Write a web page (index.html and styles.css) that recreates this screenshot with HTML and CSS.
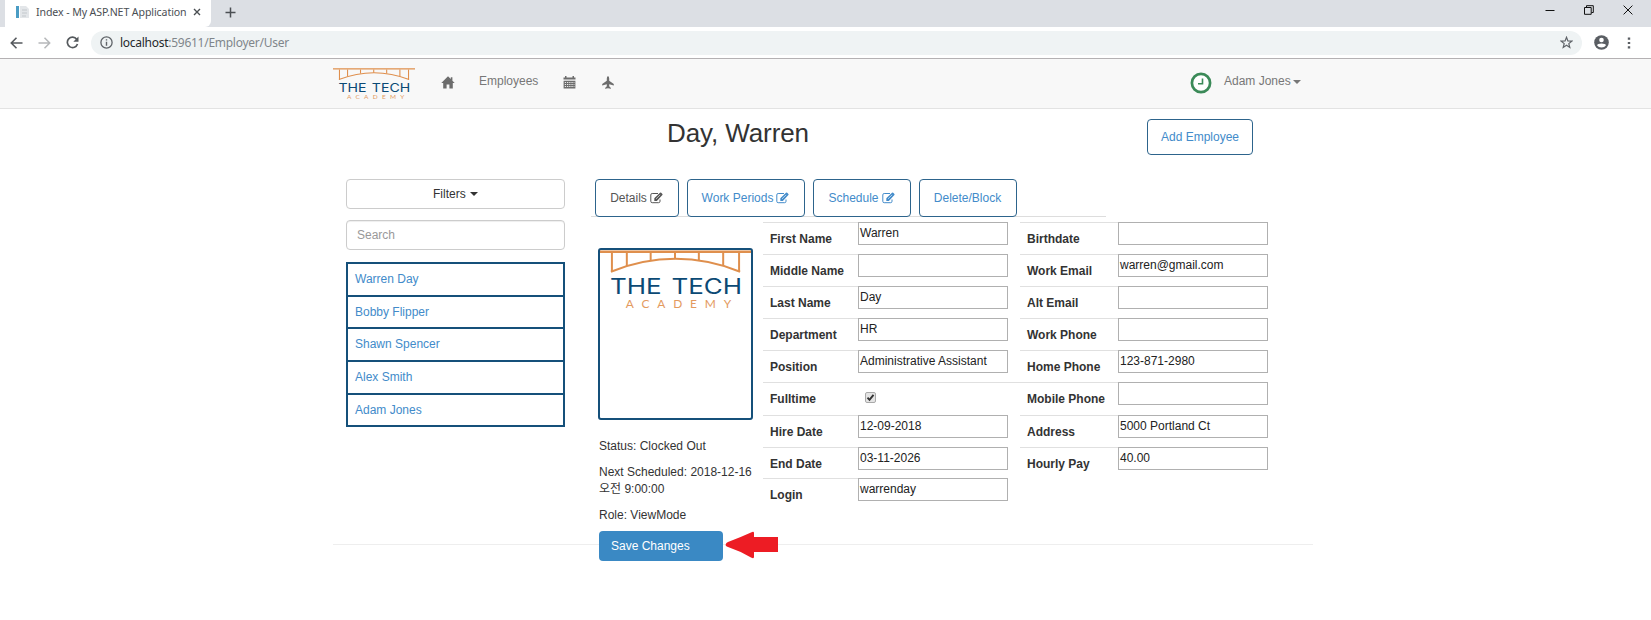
FILE: index.html
```html
<!DOCTYPE html>
<html lang="en">
<head>
<meta charset="utf-8">
<title>Index - My ASP.NET Application</title>
<link rel="stylesheet" href="styles.css">
</head>
<body>
<svg class="defs" width="0" height="0">
  <symbol id="bridge" viewBox="0 0 152 62">
    <g fill="none" stroke="#df8f4d" stroke-width="2">
      <path d="M0 1.700H152" stroke-width="2.400"/>
      <path d="M12 3V22M27 3V16M51 3V10.500M75.500 3V9M99.500 3V10.500M124 3V16M140 3V22"/>
      <path d="M11 21.700Q76 -4 141 21.700"/>
    </g>
  </symbol>
  <symbol id="edit" viewBox="0 0 13 12">
    <path d="M8 1.500H2.200Q.8 1.500 .8 2.900V9.300Q.8 10.700 2.200 10.700H8.600Q10 10.700 10 9.300V7.500" fill="none" stroke="currentColor" stroke-width="1"/>
    <path d="M4.300 8.900V6.300L10 .8Q10.600.3 11.200.8L12.400 2Q12.800 2.500 12.400 3L6.800 8.900Z" fill="currentColor"/>
    <path d="M6 6.900L10.200 2.800" stroke="#fff" stroke-width=".6"/>
  </symbol>
</svg>

<header class="chrome">
  <div class="tabstrip">
    <div class="tab">
      <svg width="14" height="14" viewBox="0 0 14 14"><path d="M4 1H10L13 4V13H4Z" fill="#e3e6e9"/><path d="M6 5H11M6 8H11M6 11H10" stroke="#c3c8cc"/><path d="M0 1H3V13H0Z" fill="#4a9cc4"/></svg>
      <span class="tab-title">Index - My ASP.NET Application</span>
      <svg class="tab-x" width="8" height="8" viewBox="0 0 8 8"><path d="M1 1L7 7M7 1L1 7" stroke="#4b4f53" stroke-width="1.400"/></svg>
    </div>
    <svg class="plus" width="11" height="11" viewBox="0 0 11 11"><path d="M5.500 .5V10.500M.5 5.500H10.500" stroke="#4b4f53" stroke-width="1.500"/></svg>
    <div class="winctl">
      <svg width="10" height="10" viewBox="0 0 10 10"><path d="M0.500 5.500H9.500" stroke="#111"/></svg>
      <svg width="10" height="10" viewBox="0 0 10 10"><path d="M.5 2.500H7.200V9.300H.5ZM2.500 2.500V.7H9.300V7.500H7.500" fill="none" stroke="#111"/></svg>
      <svg width="10" height="10" viewBox="0 0 10 10"><path d="M.6 .6L9.400 9.400M9.400 .6L.6 9.400" stroke="#111"/></svg>
    </div>
  </div>
  <div class="toolbar">
    <svg width="13" height="12" viewBox="0 0 13 12"><path d="M12.500 6H1.500M6.500 .8L1.300 6L6.500 11.200" fill="none" stroke="#55595d" stroke-width="1.600"/></svg>
    <svg width="13" height="12" viewBox="0 0 13 12"><path d="M.5 6H11.500M6.500 .8L11.700 6L6.500 11.200" fill="none" stroke="#b6b8ba" stroke-width="1.500"/></svg>
    <svg width="13" height="13" viewBox="0 0 13 13"><path d="M10.700 3.200A5.200 5.200 0 1 0 11.500 8" fill="none" stroke="#55595d" stroke-width="1.700"/><path d="M12.500 .5V5.700H7.300Z" fill="#55595d"/></svg>
    <div class="omnibox">
      <svg width="13" height="13" viewBox="0 0 13 13"><circle cx="6.500" cy="6.500" r="5.600" fill="none" stroke="#5f6368" stroke-width="1.300"/><path d="M6.500 5.800V9.800M6.500 3.200V4.600" stroke="#5f6368" stroke-width="1.400"/></svg>
      <span class="url"><b>localhost</b>:59611/Employer/User</span>
      <svg class="star" width="13" height="13" viewBox="0 0 13 13"><path d="M6.500 1.300L7.900 4.900L11.800 5.100L8.800 7.600L9.800 11.400L6.500 9.300L3.200 11.400L4.200 7.600L1.200 5.100L5.100 4.900Z" fill="none" stroke="#5f6368" stroke-width="1.200"/></svg>
    </div>
    <svg class="person" width="15" height="15" viewBox="0 0 15 15"><circle cx="7.500" cy="7.500" r="7.300" fill="#5a5e63"/><circle cx="7.500" cy="5" r="2.300" fill="#fff"/><path d="M3 10.200Q3.500 8.500 7.500 8.500T12 10.200Q10.500 12.500 7.500 12.500T3 10.200Z" fill="#fff"/></svg>
    <svg class="dots" width="4" height="12" viewBox="0 0 4 12"><path d="M.8 .5H3.200V2.700H.8ZM.8 4.900H3.200V7.100H.8ZM.8 9.300H3.200V11.500H.8Z" fill="#5a5e63"/></svg>
  </div>
</header>

<nav class="nav">
  <svg class="brand logo" width="82" height="33" viewBox="0 0 152 62" preserveAspectRatio="none">
    <use href="#bridge" width="152" height="62"/>
    <text class="word" x="10" y="45" textLength="52" lengthAdjust="spacingAndGlyphs">THE</text>
    <text class="word" x="72" y="45" textLength="71" lengthAdjust="spacingAndGlyphs">TECH</text>
    <text class="sub" x="26" y="59" textLength="106">ACADEMY</text>
  </svg>
  <svg class="home" width="14" height="13" viewBox="0 0 14 13"><path d="M7 .3L.3 7H2.200V12.500H5.600V8.500H8.400V12.500H11.800V7H13.700L11.400 4.700V1.300H9.800V3.100Z" fill="#6d6d6d"/></svg>
  <span class="employees">Employees</span>
  <svg class="cal" width="13" height="13" viewBox="0 0 13 13"><path d="M.5 1.500H2V0H3.500V1.500H9.500V0H11V1.500H12.500V3.600H.5ZM.6 4.700H12.400V12.500H.6Z" fill="#6d6d6d"/><path d="M1.800 6.500H11.400M1.800 8.500H11.400M1.800 10.500H11.400" stroke="#f8f8f8" stroke-width=".9" stroke-dasharray="1.300 .9"/></svg>
  <svg class="plane" width="12" height="13" viewBox="0 0 12 13"><path d="M6 0Q7.200 .8 7.200 2.500V4.800L11.800 8V9.500L7.200 8.300V10.300L8.900 12V12.700L6 12.200L3.100 12.700V12L4.800 10.300V8.300L.2 9.500V8L4.800 4.800V2.500Q4.800 .8 6 0Z" fill="#6d6d6d"/></svg>
  <svg class="clock" width="22" height="22" viewBox="0 0 22 22"><circle cx="11" cy="11" r="9.100" fill="#fff" stroke="#3b8a58" stroke-width="2.700"/><path d="M12.500 6.500V11.800H8" fill="none" stroke="#3b8a58" stroke-width="1.600"/></svg>
  <span class="user">Adam Jones</span><i class="caret"></i>
</nav>

<main class="page">
  <div class="titlebar">
    <h2>Day, Warren</h2>
    <a class="add">Add Employee</a>
  </div>
  <div class="columns">
    <aside class="side">
      <div class="filters">Filters <i class="caret dark"></i></div>
      <div class="search">Search</div>
      <ul class="people">
        <li>Warren Day</li><li>Bobby Flipper</li><li>Shawn Spencer</li><li>Alex Smith</li><li>Adam Jones</li>
      </ul>
    </aside>
    <section class="content">
      <div class="tabs">
        <a class="t1 active">Details <svg width="13" height="12"><use href="#edit"/></svg></a>
        <a class="t2">Work Periods <svg width="13" height="12"><use href="#edit"/></svg></a>
        <a class="t3">Schedule <svg width="13" height="12"><use href="#edit"/></svg></a>
        <a class="t4">Delete/Block</a>
      </div>
      <div class="detail">
        <div class="profile">
          <div class="photo">
            <svg class="logo" width="151" height="62" viewBox="0 0 152 62" preserveAspectRatio="none">
              <use href="#bridge" width="152" height="62"/>
              <text class="word" x="10" y="44" textLength="52" lengthAdjust="spacingAndGlyphs">THE</text>
              <text class="word" x="72" y="44" textLength="71" lengthAdjust="spacingAndGlyphs">TECH</text>
              <text class="sub" x="26" y="58" textLength="106">ACADEMY</text>
            </svg>
          </div>
          <p>Status: Clocked Out</p>
          <p>Next Scheduled: 2018-12-16<br>오전 9:00:00</p>
          <p>Role: ViewMode</p>
          <div class="save">Save Changes</div>
          <svg class="arrow" width="54" height="28" viewBox="0 0 54 28"><path d="M.5 14Q1 11.500 3 11Q15 6.500 26 1.500Q29 0 29 2V6H53V21H29V26Q29 28 26 26.500Q15 20 3 16Q1 15.500 .5 14Z" fill="#ed1c24"/></svg>
        </div>
        <dl class="fields left">
          <dt>First Name</dt><dd><span>Warren</span></dd>
          <dt>Middle Name</dt><dd><span></span></dd>
          <dt>Last Name</dt><dd><span>Day</span></dd>
          <dt>Department</dt><dd><span>HR</span></dd>
          <dt>Position</dt><dd><span>Administrative Assistant</span></dd>
          <dt>Fulltime</dt><dd class="wide"><svg class="check" width="11" height="11" viewBox="0 0 11 11"><rect x=".5" y=".5" width="10" height="10" rx="1.500" fill="#e4e4e4" stroke="#a9a9a9"/><path d="M2.500 5.700L4.500 7.800L8.500 2.800" fill="none" stroke="#333" stroke-width="1.900"/></svg></dd>
          <dt>Hire Date</dt><dd><span>12-09-2018</span></dd>
          <dt>End Date</dt><dd><span>03-11-2026</span></dd>
          <dt>Login</dt><dd><span>warrenday</span></dd>
        </dl>
        <dl class="fields right">
          <dt>Birthdate</dt><dd><span></span></dd>
          <dt>Work Email</dt><dd><span>warren@gmail.com</span></dd>
          <dt>Alt Email</dt><dd><span></span></dd>
          <dt>Work Phone</dt><dd><span></span></dd>
          <dt>Home Phone</dt><dd><span>123-871-2980</span></dd>
          <dt>Mobile Phone</dt><dd><span></span></dd>
          <dt>Address</dt><dd><span>5000 Portland Ct</span></dd>
          <dt>Hourly Pay</dt><dd><span>40.00</span></dd>
        </dl>
      </div>
    </section>
  </div>
  <hr>
</main>
</body>
</html>
```
FILE: styles.css
```css
* { box-sizing: border-box; }
body { margin: 0; height: 620px; overflow: hidden; background: #fff; font: 12px/17px "Liberation Sans", "Noto Sans CJK KR", sans-serif; color: #333; }
svg { display: block; flex: none; }
.defs { position: absolute; }

.chrome { height: 59px; border-bottom: 1px solid #b4b1b3; font-family: "Noto Sans", sans-serif; }
.tabstrip { display: flex; align-items: flex-start; height: 27px; padding-left: 5px; background: #dcdfe4; }
.tab { display: flex; align-items: center; width: 206px; height: 27px; padding: 0 0 3px 11px; background: #fff; border-radius: 0 0 6px 0; }
.tab-title { margin-left: 6px; width: 152px; font-size: 10.600px; letter-spacing: -.1px; color: #4a4e53; white-space: nowrap; }
.tab-x { margin-left: 5px; }
.plus { margin: 7px 0 0 14px; }
.winctl { display: flex; gap: 29px; margin: 5px 18px 0 auto; }
.toolbar { display: flex; align-items: center; height: 31px; padding-left: 10px; }
.toolbar > svg + svg { margin-left: 15px; }
.omnibox { display: flex; align-items: center; width: 1491px; height: 24px; margin-left: 12px; padding: 0 9px; border-radius: 12px; background: #eff3f4; }
.url { margin-left: 7px; font-size: 12px; letter-spacing: -.27px; color: #80868b; white-space: nowrap; }
.url b { font-weight: 400; color: #25282b; }
.star { margin-left: auto; }
.toolbar > .person { margin-left: 12px; }
.toolbar > .dots { margin-left: 18px; }

.nav { display: flex; align-items: flex-start; height: 50px; padding-left: 333px; background: #f8f8f8; border-bottom: 1px solid #e3e3e3; color: #777; }
.logo .word { font: 21px Inter, sans-serif; fill: #0b4a75; }
.logo .sub { font: 12px Lato, sans-serif; fill: #e39a5e; }
.brand { margin-top: 9px; }
.home { margin: 17px 0 0 26px; }
.employees { width: 60px; margin: 14px 0 0 24px; }
.cal { margin: 17px 0 0 24px; }
.plane { margin: 17px 0 0 26px; }
.clock { margin: 13px 0 0 576px; }
.user { margin: 14px 0 0 12px; }
.caret { display: inline-block; border: 3.500px solid transparent; border-top-color: #777; border-bottom: 0; }
.nav .caret { margin: 21px 0 0 2px; border-width: 4px 4px 0; }
.caret.dark { border-top-color: #333; margin-left: 1px; vertical-align: 2px; border-width: 4px 4px 0; }

.page { padding-left: 346px; }
.titlebar { display: flex; align-items: flex-start; height: 70px; }
h2 { width: 479px; margin: 8px 0 0 321px; font-size: 26px; font-weight: 400; line-height: 32px; letter-spacing: -.1px; }
.add, .tabs a { border: 1px solid #2d648c; border-radius: 4px; color: #428bca; text-align: center; white-space: nowrap; }
.add { width: 106px; height: 36px; margin: 10px 0 0 1px; line-height: 35px; }
.columns { display: flex; align-items: flex-start; height: 365px; }
.side { width: 219px; }
.filters, .search { height: 30px; border: 1px solid #ccc; border-radius: 4px; line-height: 28px; }
.filters { text-align: center; }
.search { margin-top: 11px; padding-left: 10px; color: #999; box-shadow: inset 0 1px 1px #eee; }
.people { margin: 12px 0 0; padding: 0; list-style: none; border: 2px solid #15507a; border-top-width: 0; }
.people li { height: 32.700px; padding-left: 7px; border-top: 2px solid #15507a; line-height: 31px; color: #428bca; }

.content { margin-left: 26px; }
.tabs { display: flex; gap: 8px; width: 515px; height: 38px; padding-left: 4px; border-bottom: 1px solid #ddd; }
.tabs a { display: flex; align-items: center; justify-content: center; gap: 3px; height: 38px; padding-right: 1px; }
.tabs a.active { color: #555; }
.t1 { width: 84px; }
.t2 { width: 118px; }
.t3 { width: 98px; }
.t4 { width: 98px; }
.detail { display: flex; align-items: flex-start; margin-top: 5px; }
.profile { position: relative; z-index: 1; width: 172px; padding: 26px 0 0 7px; }
.photo { width: 155px; height: 172px; border: 2px solid #15507a; border-radius: 3px; margin-bottom: 18px; }
.profile p { margin: 0 0 9px 1px; white-space: nowrap; }
.save { width: 124px; height: 30px; margin: -2px 0 0 1px; padding-left: 12px; border-radius: 4px; background: #3a89c4; color: #fff; line-height: 31px; }
.arrow { position: absolute; left: 134px; top: 309px; }
.fields { display: grid; align-content: start; margin: 0; }
.fields.left { grid-template-columns: 95px 162px; grid-template-rows: 32px 32px 32px 32px 32px 33px 32px 31px 31px; }
.fields.right { grid-template-columns: 98px 150px; grid-template-rows: 32px 32px 32px 32px 32px 33px 32px 32px; }
dt { padding: 8px 0 0 7px; border-top: 1px solid #e0e0e0; font-weight: 700; }
dd { margin: 0; }
dd.wide { border-top: 1px solid #e0e0e0; }
dd span { display: block; width: 150px; height: 23px; padding-left: 1px; border: 1px solid #b0b0b0; color: #222; line-height: 21px; }
.check { margin: 9px 0 0 7px; }
hr { width: 980px; height: 1px; margin: 0 0 0 -13px; border: 0; background: #eee; }
```
